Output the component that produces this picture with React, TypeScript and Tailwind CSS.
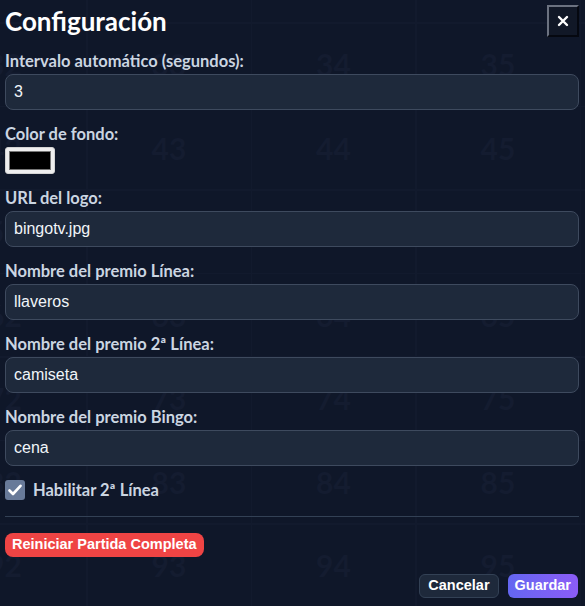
import React from "react";

const cols = [2, 3, 4, 5, 6];
const rows = [2, 3, 4, 5, 6, 7, 8, 9];

function Board() {
  return (
    <div
      aria-hidden="true"
      className="absolute left-[-77px] top-[-60px] grid grid-cols-[repeat(5,163px)] grid-rows-[repeat(8,82px)] gap-[1.5px] bg-[#121a2d]"
    >
      {rows.map((r) =>
        cols.map((c) => (
          <div
            key={`${r}-${c}`}
            className="flex items-center justify-center bg-[#0f1729] text-[30px] font-bold text-[#141c30] [font-family:Lato,sans-serif]"
          >
            {r * 10 + c}
          </div>
        ))
      )}
    </div>
  );
}

const labelCls =
  "mb-[3px] block text-[16.5px] leading-5 font-bold text-[#cbd5e1] [font-family:Lato,sans-serif]";

function Field({ label, value }: { label: string; value: string }) {
  return (
    <div className="mb-[14px]">
      <label className={labelCls}>{label}</label>
      <div className="flex h-9 items-center rounded-lg border border-[#3e4a5e] bg-[#1e293b] px-[8px] text-[16px] text-[#f1f5f9] [font-family:'Liberation_Sans',Arial,sans-serif]">
        {value}
      </div>
    </div>
  );
}

export default function App() {
  return (
    <div className="relative h-[606px] w-[585px] overflow-hidden bg-[#0f172a]">
      <Board />
      <div className="relative z-10 flex h-full flex-col pl-[5px] pr-[6px] pt-[5px]">
        <div className="mb-[14px] flex h-8 items-center justify-between">
          <h2 className="text-[26px] leading-8 font-bold text-white [font-family:Lato,sans-serif]">
            Configuración
          </h2>
          <button className="flex h-8 w-8 items-center justify-center border-2 border-t-[#6b7280] border-l-[#6b7280] border-r-[#050810] border-b-[#050810] bg-[#111827] text-white">
            <svg width="12" height="12" viewBox="0 0 12 12">
              <path d="M2 2 L10 10 M10 2 L2 10" stroke="white" strokeWidth="2.4" strokeLinecap="round" />
            </svg>
          </button>
        </div>

        <Field label="Intervalo automático (segundos):" value="3" />

        <div className="mb-[14px]">
          <label className={labelCls}>Color de fondo:</label>
          <div className="h-[27px] w-[50px] rounded-[3px] border border-[#d4d4d4] bg-[#efefef] p-[3px]">
            <div className="h-full w-full border border-[#777] bg-black" />
          </div>
        </div>

        <Field label="URL del logo:" value="bingotv.jpg" />
        <Field label="Nombre del premio Línea:" value="llaveros" />
        <Field label="Nombre del premio 2ª Línea:" value="camiseta" />
        <Field label="Nombre del premio Bingo:" value="cena" />

        <div className="flex h-5 items-center gap-[8px]">
          <div className="flex h-[20px] w-[20px] items-center justify-center rounded-[3px] bg-[#687a99]">
            <svg width="14" height="12" viewBox="0 0 14 12">
              <path d="M1.5 6.5 L5 10 L12.5 1.8" fill="none" stroke="white" strokeWidth="2.6" strokeLinecap="round" strokeLinejoin="round" />
            </svg>
          </div>
          <span className="text-[16.5px] leading-5 font-bold text-[#cbd5e1] [font-family:Lato,sans-serif]">
            Habilitar 2ª Línea
          </span>
        </div>

        <div className="mt-[16px] h-px bg-[#334155]" />

        <div className="mt-[16px] flex">
          <button className="h-6 rounded-lg bg-[#ef4444] px-[7px] text-[14.5px] font-bold text-white [font-family:'Liberation_Sans',Arial,sans-serif]">
            Reiniciar Partida Completa
          </button>
        </div>

        <div className="mt-[17px] flex justify-end gap-[9px] pr-[1px]">
          <button className="h-6 rounded-md border border-[#334155] bg-[#1e293b] px-[8px] text-[14.5px] font-bold text-white [font-family:'Liberation_Sans',Arial,sans-serif]">
            Cancelar
          </button>
          <button className="h-6 rounded-md bg-gradient-to-r from-[#6366f1] to-[#8b5cf6] px-[7px] text-[14.5px] font-bold text-white [font-family:'Liberation_Sans',Arial,sans-serif]">
            Guardar
          </button>
        </div>
      </div>
    </div>
  );
}
